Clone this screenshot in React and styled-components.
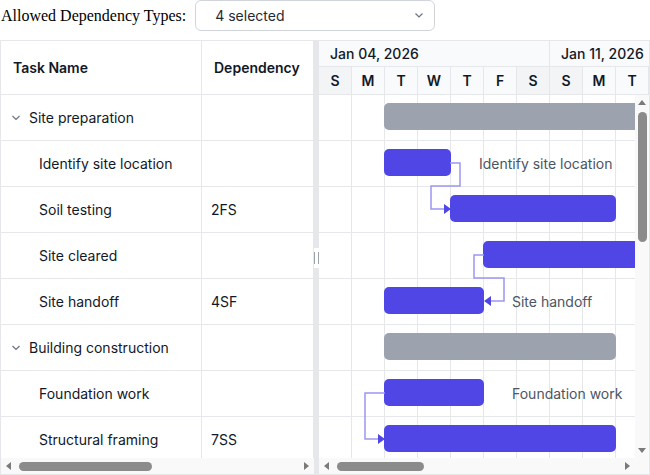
import React from 'react';
import styled, { createGlobalStyle } from 'styled-components';

const DAY = 33;
const ROW = 46;
const DAYS = 32;
const BORDER = '#e5e7eb';
const LETTERS = ['S', 'M', 'T', 'W', 'T', 'F', 'S'];

const GlobalStyle = createGlobalStyle`
  html, body {
    margin: 0;
    padding: 0;
    background: #fff;
  }
  * { box-sizing: border-box; }
`;

const Page = styled.div`
  width: 650px;
  height: 475px;
  overflow: hidden;
  font-family: Inter, "Noto Sans", sans-serif;
  color: #111827;
`;

const Toolbar = styled.div`
  display: flex;
  align-items: center;
  gap: 9px;
  height: 32px;
  padding-left: 1px;
`;

const Label = styled.span`
  font-family: "Liberation Serif", "Times New Roman", serif;
  font-size: 16px;
  color: #000;
`;

const Select = styled.div`
  width: 240px;
  height: 31px;
  margin-top: -1px;
  border: 1px solid #d1d5db;
  border-radius: 6px;
  display: flex;
  align-items: center;
  justify-content: space-between;
  padding: 0 9px 1px 19px;
  font-size: 14px;
  color: #1f2937;
  background: #fff;
`;

const Gantt = styled.div`
  margin-top: 8px;
  width: 650px;
  height: 435px;
  border: 1px solid ${BORDER};
  display: flex;
`;

const GridPane = styled.div`
  width: 313px;
  flex: none;
  display: flex;
  flex-direction: column;
`;

const Viewport = styled.div`
  flex: 1;
  min-width: 0;
  min-height: 0;
  overflow: hidden;
`;

const GridInner = styled.div`
  width: 686px;
`;

const GridRow = styled.div`
  display: flex;
  height: ${p => (p.$header ? 54 : ROW)}px;
  border-bottom: 1px solid ${BORDER};
`;

const Cell = styled.div`
  width: ${p => p.$w}px;
  flex: none;
  display: flex;
  align-items: center;
  gap: 8px;
  padding-left: ${p => p.$pad}px;
  border-right: 1px solid ${BORDER};
  font-size: 14px;
  font-weight: ${p => (p.$header ? 600 : 400)};
  white-space: nowrap;
`;

const Splitter = styled.div`
  width: 5px;
  flex: none;
  background: ${BORDER};
  display: flex;
  align-items: center;
`;

const Grip = styled.div`
  width: 5px;
  height: 20px;
  background: #fff;
  display: flex;
  align-items: center;
  justify-content: space-between;
  span {
    width: 1px;
    height: 12px;
    background: #9ca3af;
  }
`;

const ChartPane = styled.div`
  flex: 1;
  min-width: 0;
  display: flex;
  flex-direction: column;
`;

const ChartHeader = styled.div`
  height: 54px;
  flex: none;
  overflow: hidden;
`;

const HeaderBand = styled.div`
  display: flex;
  width: ${DAYS * DAY}px;
  height: ${p => p.$h}px;
  border-bottom: 1px solid ${BORDER};
  background: #f9fafb;
`;

const WeekCell = styled.div`
  width: ${7 * DAY}px;
  flex: none;
  display: flex;
  align-items: center;
  padding-left: 11px;
  border-right: 1px solid ${BORDER};
  font-size: 14px;
  font-weight: 500;
`;

const DayCell = styled.div`
  width: ${DAY}px;
  flex: none;
  display: flex;
  align-items: center;
  justify-content: center;
  border-right: 1px solid ${BORDER};
  background: ${p => (p.$weekend ? '#f3f4f6' : '#f9fafb')};
  font-size: 14px;
  font-weight: 600;
`;

const ChartMiddle = styled.div`
  flex: 1;
  min-height: 0;
  display: flex;
`;

const ChartBottom = styled.div`
  display: flex;
  flex: none;
`;

const Corner = styled.div`
  flex: none;
  width: 14px;
  height: 16px;
  background: #f9f9f9;
`;

const Timeline = styled.div`
  position: relative;
  width: ${DAYS * DAY}px;
`;

const ChartRow = styled.div`
  position: relative;
  height: ${ROW}px;
  border-bottom: 1px solid ${BORDER};
  background-image: linear-gradient(to right, transparent ${DAY - 1}px, ${BORDER} ${DAY - 1}px);
  background-size: ${DAY}px 100%;
`;

const Bar = styled.div`
  position: absolute;
  top: 8px;
  height: 27px;
  border-radius: 5px;
  background: ${p => (p.$summary ? '#9ca3af' : '#4f46e5')};
`;

const BarLabel = styled.span`
  position: absolute;
  top: 0;
  height: ${ROW - 1}px;
  display: flex;
  align-items: center;
  font-size: 14px;
  color: #4b5563;
  white-space: nowrap;
`;

const Links = styled.svg`
  position: absolute;
  left: 0;
  top: 0;
  pointer-events: none;
`;

const Track = styled.div`
  flex: 0 1 auto;
  display: flex;
  flex-direction: ${p => (p.$vertical ? 'column' : 'row')};
  ${p => (p.$vertical ? 'width: 14px;' : 'height: 16px; width: 100%; min-width: 0;')}
  background: #f9f9f9;
`;

const ArrowBox = styled.div`
  flex: none;
  width: ${p => (p.$vertical ? 14 : 15)}px;
  height: 15px;
  display: flex;
  align-items: center;
  justify-content: center;
`;

const Triangle = styled.span`
  width: 0;
  height: 0;
  border-style: solid;
  border-color: transparent;
  ${p => ({
    up: 'border-width: 0 4px 5px 4px; border-bottom-color: #7a7a7a;',
    down: 'border-width: 5px 4px 0 4px; border-top-color: #7a7a7a;',
    left: 'border-width: 4px 5px 4px 0; border-right-color: #7a7a7a;',
    right: 'border-width: 4px 0 4px 5px; border-left-color: #7a7a7a;',
  }[p.$dir])}
`;

const Rail = styled.div`
  flex: 1;
  min-width: 0;
  min-height: 0;
  display: flex;
  flex-direction: ${p => (p.$vertical ? 'column' : 'row')};
  align-items: center;
`;

const Thumb = styled.div`
  flex: none;
  border-radius: 5px;
  background: #8b8b8b;
  ${p => (p.$vertical
    ? `width: 9px; height: ${p.$size}px; margin-top: ${p.$start}px;`
    : `height: 9px; width: ${p.$size}px; margin-left: ${p.$start}px;`)}
`;

const Scrollbar = ({ vertical, start, size }) => (
  <Track $vertical={vertical}>
    <ArrowBox $vertical={vertical}><Triangle $dir={vertical ? 'up' : 'left'} /></ArrowBox>
    <Rail $vertical={vertical}>
      <Thumb $vertical={vertical} $start={start} $size={size} />
    </Rail>
    <ArrowBox $vertical={vertical}><Triangle $dir={vertical ? 'down' : 'right'} /></ArrowBox>
  </Track>
);

const tasks = [
  { name: 'Site preparation', parent: true, start: 2, days: 12 },
  { name: 'Identify site location', start: 2, days: 2, label: true },
  { name: 'Soil testing', dep: '2FS', start: 4, days: 5 },
  { name: 'Site cleared', start: 5, days: 6 },
  { name: 'Site handoff', dep: '4SF', start: 2, days: 3, label: true },
  { name: 'Building construction', parent: true, start: 2, days: 7 },
  { name: 'Foundation work', start: 2, days: 3, label: true },
  { name: 'Structural framing', dep: '7SS', start: 2, days: 7 },
  { name: 'Roofing', dep: '8FS', start: 9, days: 4 },
  { name: 'Interior finishing', parent: true, start: 12, days: 8 },
  { name: 'Electrical wiring', start: 12, days: 3 },
  { name: 'Plumbing', start: 13, days: 3 },
];

const Chevron = () => (
  <svg width="10" height="10" viewBox="0 0 10 10">
    <polyline points="1.5,3 5,6.5 8.5,3" fill="none" stroke="#6b7280" strokeWidth="1.2" />
  </svg>
);

const SelectChevron = () => (
  <svg width="12" height="12" viewBox="0 0 12 12">
    <polyline points="2.5,4.5 6,8 9.5,4.5" fill="none" stroke="#6b7280" strokeWidth="1.2" />
  </svg>
);

const x = d => d * DAY;
const mid = r => r * ROW + 22;

// dependency connectors, in timeline coordinates
const LINKS = [
  // 2FS: end of task 2 -> start of task 3
  { d: `M${x(4) - 1} ${mid(1)} H${x(4) + 9} V${ROW * 2 - 1} H${x(4) - 20} V${mid(2)} H${x(4) - 6}`, tip: [x(4), mid(2), 'right'] },
  // 4SF: start of task 4 -> finish of task 5
  { d: `M${x(5)} ${mid(3)} H${x(5) - 10} V${ROW * 4 - 1} H${x(5) + 20} V${mid(4)} H${x(5) + 6}`, tip: [x(5), mid(4), 'left'] },
  // 7SS: start of task 7 -> start of task 8
  { d: `M${x(2)} ${mid(6)} H${x(2) - 20} V${mid(7)} H${x(2) - 6}`, tip: [x(2), mid(7), 'right'] },
];

const Tip = ({ at: [tx, ty, dir] }) => {
  const pts = dir === 'right'
    ? `${tx},${ty} ${tx - 7},${ty - 5} ${tx - 7},${ty + 5}`
    : `${tx},${ty} ${tx + 7},${ty - 5} ${tx + 7},${ty + 5}`;
  return <polygon points={pts} fill="#4f46e5" />;
};

const weeks = ['Jan 04, 2026', 'Jan 11, 2026', 'Jan 18, 2026', 'Jan 25, 2026', 'Feb 01, 2026'];

export default function App() {
  return (
    <Page>
      <GlobalStyle />
      <Toolbar>
        <Label>Allowed Dependency Types:</Label>
        <Select>
          <span>4 selected</span>
          <SelectChevron />
        </Select>
      </Toolbar>
      <Gantt>
        <GridPane>
          <Viewport>
            <GridInner>
              <GridRow $header>
                <Cell $w={201} $pad={12} $header>Task Name</Cell>
                <Cell $w={112} $pad={12} $header>Dependency</Cell>
                <Cell $w={120} $pad={12} $header>Duration</Cell>
                <Cell $w={126} $pad={12} $header>Start Date</Cell>
                <Cell $w={126} $pad={12} $header>End Date</Cell>
              </GridRow>
              {tasks.map((t, i) => (
                <GridRow key={i}>
                  <Cell $w={201} $pad={t.parent ? 10 : 38}>
                    {t.parent && <Chevron />}
                    {t.name}
                  </Cell>
                  <Cell $w={112} $pad={9}>{t.dep || ''}</Cell>
                  <Cell $w={120} $pad={12}>{`${t.days} days`}</Cell>
                  <Cell $w={126} $pad={12} />
                  <Cell $w={126} $pad={12} />
                </GridRow>
              ))}
            </GridInner>
          </Viewport>
          <Scrollbar start={3} size={133} />
        </GridPane>
        <Splitter>
          <Grip><span /><span /></Grip>
        </Splitter>
        <ChartPane>
          <ChartHeader>
            <HeaderBand $h={26}>
              {weeks.map(w => <WeekCell key={w}>{w}</WeekCell>)}
            </HeaderBand>
            <HeaderBand $h={28}>
              {Array.from({ length: DAYS }, (_, d) => (
                <DayCell key={d} $weekend={d % 7 === 0 || d % 7 === 6}>
                  {LETTERS[d % 7]}
                </DayCell>
              ))}
            </HeaderBand>
          </ChartHeader>
          <ChartMiddle>
            <Viewport>
              <Timeline>
                {tasks.map((t, i) => (
                  <ChartRow key={i}>
                    <Bar
                      $summary={t.parent}
                      style={{ left: x(t.start) - 1, width: t.days * DAY + 1 }}
                    />
                    {t.label && (
                      <BarLabel style={{ left: x(t.start + t.days) + 28 }}>{t.name}</BarLabel>
                    )}
                  </ChartRow>
                ))}
                <Links width={DAYS * DAY} height={tasks.length * ROW}>
                  {LINKS.map((l, i) => (
                    <g key={i}>
                      <path d={l.d} fill="none" stroke="#9b97f2" strokeWidth="1.5" />
                      <Tip at={l.tip} />
                    </g>
                  ))}
                </Links>
              </Timeline>
            </Viewport>
            <Scrollbar vertical start={2} size={130} />
          </ChartMiddle>
          <ChartBottom>
            <Scrollbar start={3} size={87} />
            <Corner />
          </ChartBottom>
        </ChartPane>
      </Gantt>
    </Page>
  );
}
